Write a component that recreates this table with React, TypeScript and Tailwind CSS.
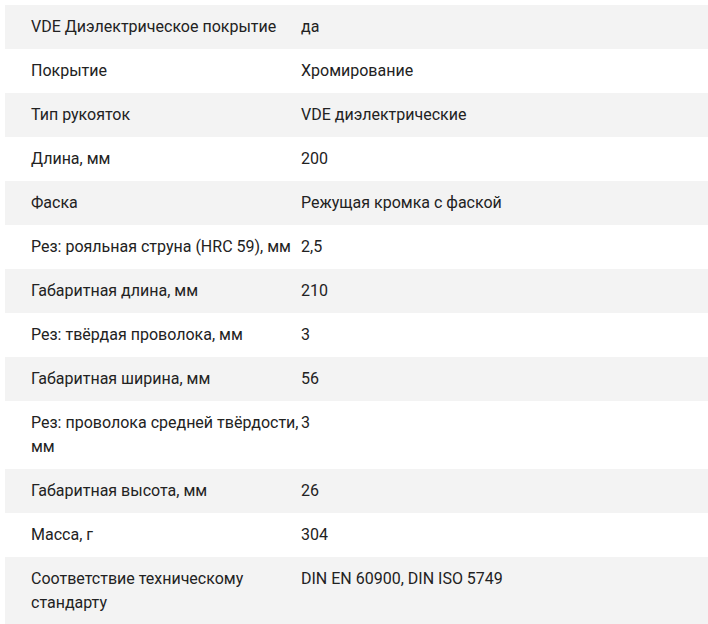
const specs: [string, string][] = [
  ["VDE Диэлектрическое покрытие", "да"],
  ["Покрытие", "Хромирование"],
  ["Тип рукояток", "VDE диэлектрические"],
  ["Длина, мм", "200"],
  ["Фаска", "Режущая кромка с фаской"],
  ["Рез: рояльная струна (HRC 59), мм", "2,5"],
  ["Габаритная длина, мм", "210"],
  ["Рез: твёрдая проволока, мм", "3"],
  ["Габаритная ширина, мм", "56"],
  ["Рез: проволока средней твёрдости, мм", "3"],
  ["Габаритная высота, мм", "26"],
  ["Масса, г", "304"],
  ["Соответствие техническому стандарту", "DIN EN 60900, DIN ISO 5749"],
];

export default function App() {
  return (
    <div className="w-[708px] h-[624px] overflow-hidden bg-white pt-[5px] pl-[5px] font-['Roboto',sans-serif] text-[16px] leading-[24px] text-[#222]">
      {specs.map(([label, value], i) => (
        <div
          key={label}
          className={`flex py-[10px] pl-[26px] ${i % 2 === 0 ? "bg-[#f3f3f3]" : "bg-white"}`}
        >
          <div className="w-[270px] shrink-0">{label}</div>
          <div className="flex-1">{value}</div>
        </div>
      ))}
    </div>
  );
}
